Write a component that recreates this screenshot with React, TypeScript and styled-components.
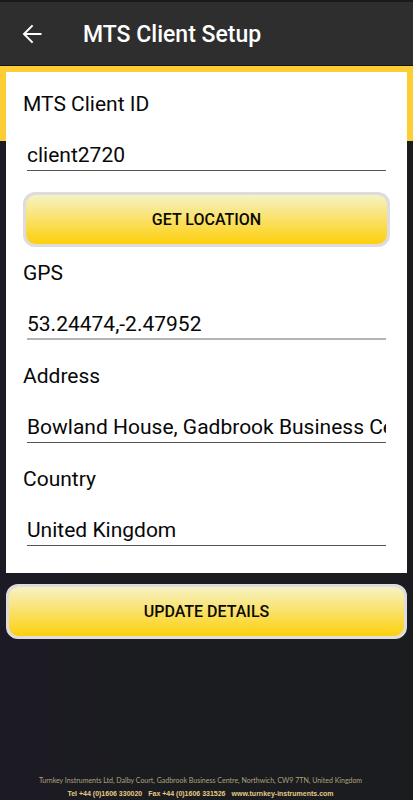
import React from "react";
import styled, { createGlobalStyle } from "styled-components";

const GlobalStyle = createGlobalStyle`
  *, *::before, *::after { box-sizing: border-box; }
  body {
    margin: 0;
    background: #1b1b20;
    font-family: Roboto, "Liberation Sans", sans-serif;
    color: #080808;
  }
`;

const Screen = styled.div`
  display: flex;
  flex-direction: column;
  min-height: 100vh;
  background: linear-gradient(90deg, #1c1a25 0%, #1b1c20 30%, #1a1c1f 100%);
`;

const AppBar = styled.header`
  display: flex;
  align-items: center;
  gap: 34px;
  height: 66px;
  padding: 0 15px;
  background: #2e2e2e;
  border-top: 2px solid #1a1a1a;
  border-bottom: 1px solid #15140f;
`;

const BackButton = styled.button`
  display: flex;
  align-items: center;
  justify-content: center;
  width: 34px;
  height: 34px;
  padding: 0;
  border: 0;
  background: none;
  color: #fff;
`;

const Title = styled.h1`
  margin: 0;
  padding-top: 2px;
  font-size: 23px;
  line-height: 28px;
  font-weight: 500;
  color: #fff;
`;

const Form = styled.form`
  display: flex;
  flex: 1;
  flex-direction: column;
  gap: 11px;
  padding: 6px 6px 0;
  background: linear-gradient(#fbce35, #fbce35) top / 100% 75px no-repeat;
`;

const Card = styled.section`
  display: flex;
  flex-direction: column;
  gap: 22px;
  padding: 18px 17px 27px;
  background: #fff;
`;

const Group = styled.div<{ $gap: number }>`
  display: flex;
  flex-direction: column;
  gap: ${(p) => p.$gap}px;
`;

const FieldRow = styled.div`
  display: flex;
  flex-direction: column;
  gap: 22px;
`;

const Label = styled.label`
  font-size: 21px;
  line-height: 28px;
`;

const TextInput = styled.input<{ $muted?: boolean }>`
  height: 31px;
  margin: 0 4px;
  padding: 0;
  border: 0;
  border-bottom: ${(p) => (p.$muted ? "2px solid #b4b4b4" : "1px solid #555")};
  border-radius: 0;
  outline: 0;
  background: transparent;
  font: inherit;
  font-size: 21px;
  color: inherit;
`;

const ActionButton = styled.button`
  width: 100%;
  height: 55px;
  padding: 0;
  border: 3px solid #dedcdc;
  border-radius: 12px;
  background: linear-gradient(#f6f2c4, #fdd00c) padding-box, #dedcdc;
  font: inherit;
  font-size: 16px;
  font-weight: 500;
  color: #0c0a04;
`;

const Footer = styled.footer`
  padding: 0 12px 0 0;
  text-align: center;
  line-height: 13px;
  white-space: nowrap;
`;

const AddressLine = styled.div`
  font-family: Lato, sans-serif;
  font-size: 7px;
  color: #b0a27c;
`;

const ContactLine = styled.address`
  display: flex;
  justify-content: center;
  gap: 6px;
  font-family: "Liberation Sans", sans-serif;
  font-size: 7px;
  font-style: normal;
  font-weight: 700;
  color: #e5cb85;
`;

const SiteLink = styled.a`
  color: inherit;
  text-decoration: none;
`;

type FieldProps = { id: string; label: string; value: string; muted?: boolean };

function Field({ id, label, value, muted }: FieldProps) {
  return (
    <FieldRow>
      <Label htmlFor={id}>{label}</Label>
      <TextInput id={id} type="text" defaultValue={value} $muted={muted} />
    </FieldRow>
  );
}

export default function App() {
  return (
    <>
      <GlobalStyle />
      <Screen>
        <AppBar>
          <BackButton type="button" aria-label="Back">
            <svg width="20" height="20" viewBox="0 0 20 20" fill="none" stroke="currentColor" strokeWidth="2">
              <path d="M19.5 10H2.2M10.6 1.4L2 10l8.6 8.6" />
            </svg>
          </BackButton>
          <Title>MTS Client Setup</Title>
        </AppBar>
        <Form onSubmit={(e) => e.preventDefault()}>
          <Card>
            <Group $gap={21}>
              <Field id="client" label="MTS Client ID" value="client2720" />
              <Group $gap={12}>
                <ActionButton type="button">GET LOCATION</ActionButton>
                <Field id="gps" label="GPS" value="53.24474,-2.47952" muted />
              </Group>
            </Group>
            <Field id="address" label="Address" value="Bowland House, Gadbrook Business Centre" />
            <Field id="country" label="Country" value="United Kingdom" />
          </Card>
          <ActionButton type="submit">UPDATE DETAILS</ActionButton>
        </Form>
        <Footer>
          <AddressLine>
            Turnkey Instruments Ltd, Dalby Court, Gadbrook Business Centre, Northwich, CW9 7TN, United Kingdom
          </AddressLine>
          <ContactLine>
            <span>Tel +44 (0)1606 330020</span>
            <span>Fax +44 (0)1606 331526</span>
            <SiteLink href="#">www.turnkey-instruments.com</SiteLink>
          </ContactLine>
        </Footer>
      </Screen>
    </>
  );
}
